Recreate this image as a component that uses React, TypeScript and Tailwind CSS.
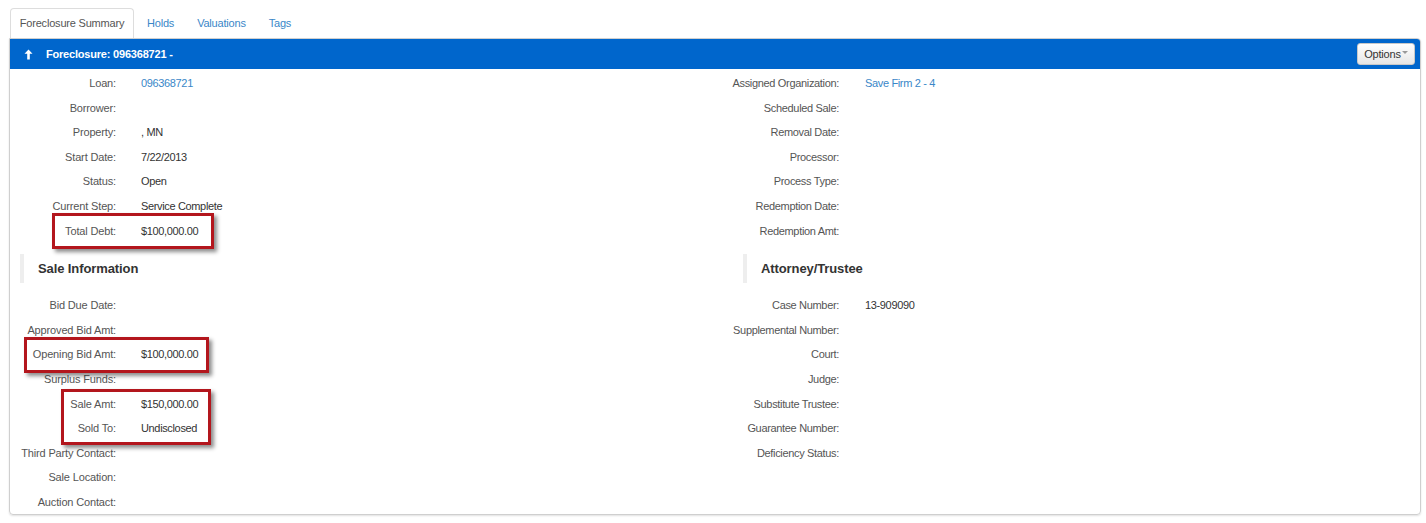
import React from "react";

type Row = { label: string; value?: string; link?: boolean };

const leftTop: Row[] = [
  { label: "Loan:", value: "096368721", link: true },
  { label: "Borrower:" },
  { label: "Property:", value: ", MN" },
  { label: "Start Date:", value: "7/22/2013" },
  { label: "Status:", value: "Open" },
  { label: "Current Step:", value: "Service Complete" },
  { label: "Total Debt:", value: "$100,000.00" },
];

const leftBottom: Row[] = [
  { label: "Bid Due Date:" },
  { label: "Approved Bid Amt:" },
  { label: "Opening Bid Amt:", value: "$100,000.00" },
  { label: "Surplus Funds:" },
  { label: "Sale Amt:", value: "$150,000.00" },
  { label: "Sold To:", value: "Undisclosed" },
  { label: "Third Party Contact:" },
  { label: "Sale Location:" },
  { label: "Auction Contact:" },
];

const rightTop: Row[] = [
  { label: "Assigned Organization:", value: "Save Firm 2 - 4", link: true },
  { label: "Scheduled Sale:" },
  { label: "Removal Date:" },
  { label: "Processor:" },
  { label: "Process Type:" },
  { label: "Redemption Date:" },
  { label: "Redemption Amt:" },
];

const rightBottom: Row[] = [
  { label: "Case Number:", value: "13-909090" },
  { label: "Supplemental Number:" },
  { label: "Court:" },
  { label: "Judge:" },
  { label: "Substitute Trustee:" },
  { label: "Guarantee Number:" },
  { label: "Deficiency Status:" },
];

function Rows({ rows, vgap, track }: { rows: Row[]; vgap: string; track: string }) {
  return (
    <div>
      {rows.map((r) => (
        <div key={r.label} className="flex h-[24.6px] items-center whitespace-nowrap">
          <div className={"flex w-[106px] shrink-0 justify-end text-[#555] " + track}>
            <span>{r.label}</span>
          </div>
          <div className={vgap + " " + (r.link ? "text-[#3a87c8]" : "text-[#333]")}>{r.value ?? ""}</div>
        </div>
      ))}
    </div>
  );
}

function Heading({ text }: { text: string }) {
  return (
    <div className="mt-[11px] mb-[10px] ml-[10px] flex h-[29px] items-center border-l-[4px] border-[#eeeeee] pl-[14px] text-[13px] font-bold tracking-[-0.1px] text-[#333]">
      {text}
    </div>
  );
}

function RedBox({ cls }: { cls: string }) {
  return (
    <div
      className={
        "pointer-events-none absolute border-[3px] border-[#b3161d] shadow-[3px_3px_4px_rgba(0,0,0,0.45)] " + cls
      }
    />
  );
}

export default function App() {
  return (
    <div
      className="relative min-h-[523px] w-[1426px] bg-white pt-[8px] text-[11px] tracking-[-0.35px]"
      style={{ fontFamily: '"Liberation Sans", Arial, sans-serif' }}
    >
      {/* Tabs */}
      <div className="ml-[10px] flex h-[30px] items-stretch tracking-[-0.2px]">
        <div className="flex w-[124px] items-center justify-center rounded-t-[4px] border border-b-0 border-[#dddddd] bg-white text-[#555]">
          Foreclosure Summary
        </div>
        <div className="ml-[2px] flex items-center px-[11px] text-[#3a87c8]">Holds</div>
        <div className="ml-[1px] flex items-center px-[11px] text-[#3a87c8]">Valuations</div>
        <div className="ml-[1px] flex items-center px-[11px] text-[#3a87c8]">Tags</div>
      </div>

      {/* Panel */}
      <div className="ml-[9px] h-[477px] w-[1412px] overflow-hidden rounded-[4px] rounded-tl-none border border-[#cfcfcf] shadow-[0_1px_2px_rgba(0,0,0,0.12)]">
        <div className="flex h-[30px] items-center justify-between bg-[#0066cc] pr-[5px]">
          <div className="flex items-center font-bold tracking-[-0.2px] text-white">
            <svg width="9" height="11" viewBox="0 0 9 11" className="ml-[14px]">
              <path d="M4.5 0.5 L8.5 4.8 L5.8 4.8 L5.8 10.5 L3.2 10.5 L3.2 4.8 L0.5 4.8 Z" fill="white" />
            </svg>
            <span className="ml-[13px]">Foreclosure: 096368721 -</span>
          </div>
          <div className="flex h-[22px] w-[58px] items-center justify-center rounded-[3px] border border-[#c8c8c8] bg-gradient-to-b from-white to-[#e6e6e6] tracking-[-0.2px] text-[#333]">
            Options
            <svg width="6" height="4" viewBox="0 0 6 4" className="ml-[1px] mb-[2px]">
              <path d="M0 0 L6 0 L3 3 Z" fill="#999" />
            </svg>
          </div>
        </div>

        <div className="flex pt-[2px]">
          <div className="w-[723px] shrink-0">
            <Rows rows={leftTop} vgap="ml-[25px]" track="tracking-[-0.15px]" />
            <Heading text="Sale Information" />
            <Rows rows={leftBottom} vgap="ml-[25px]" track="tracking-[-0.15px]" />
          </div>
          <div className="flex-1">
            <Rows rows={rightTop} vgap="ml-[26px]" track="tracking-[-0.33px]" />
            <Heading text="Attorney/Trustee" />
            <Rows rows={rightBottom} vgap="ml-[26px]" track="tracking-[-0.33px]" />
          </div>
        </div>
      </div>

      <RedBox cls="left-[52px] top-[213px] w-[162px] h-[36px]" />
      <RedBox cls="left-[24px] top-[337px] w-[185px] h-[36px]" />
      <RedBox cls="left-[61px] top-[389px] w-[150px] h-[56px]" />
    </div>
  );
}
